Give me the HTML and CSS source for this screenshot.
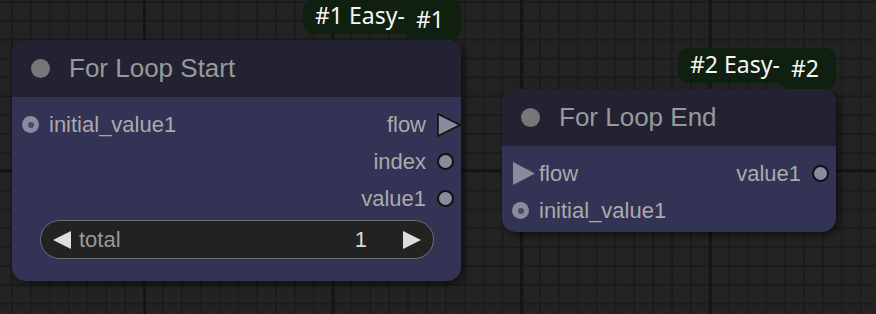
FILE: index.html
```html
<!DOCTYPE html>
<html>
<head>
<meta charset="utf-8">
<link rel="stylesheet" href="styles.css">
</head>
<body>
<div class="canvas">
  <div class="node node-start">
    <div class="badges">
      <span class="badge badge-main">#1 Easy-</span>
      <span class="badge badge-id">#1</span>
    </div>
    <div class="title"><span class="title-dot"></span><span class="title-text">For Loop Start</span></div>
    <div class="body">
      <div class="row">
        <div class="slot-in"><span class="marker"><span class="opt-dot"></span></span><span class="label">initial_value1</span></div>
        <div class="slot-out"><span class="label">flow</span><span class="marker"><svg width="24" height="24" viewBox="0 0 24 24"><polygon points="1,1 23,12 1,23" fill="#8a8a9c" stroke="#111" stroke-width="1.6"/></svg></span></div>
      </div>
      <div class="row">
        <div class="slot-in"></div>
        <div class="slot-out"><span class="label">index</span><span class="marker"><span class="circle"></span></span></div>
      </div>
      <div class="row">
        <div class="slot-in"></div>
        <div class="slot-out"><span class="label">value1</span><span class="marker"><span class="circle"></span></span></div>
      </div>
      <div class="widget">
        <svg class="arrow" width="18" height="18" viewBox="0 0 18 18"><polygon points="18,0 0,9 18,18" fill="#ddd"/></svg>
        <span class="w-label">total</span>
        <span class="w-value">1</span>
        <svg class="arrow" width="18" height="18" viewBox="0 0 18 18"><polygon points="0,0 18,9 0,18" fill="#ddd"/></svg>
      </div>
    </div>
  </div>

  <div class="node node-end">
    <div class="badges">
      <span class="badge badge-main">#2 Easy-</span>
      <span class="badge badge-id">#2</span>
    </div>
    <div class="title"><span class="title-dot"></span><span class="title-text">For Loop End</span></div>
    <div class="body">
      <div class="row">
        <div class="slot-in"><span class="marker"><svg width="23" height="23" viewBox="0 0 23 23"><polygon points="1,0 23,11.5 1,23" fill="#8a8a9c"/></svg></span><span class="label">flow</span></div>
        <div class="slot-out"><span class="label">value1</span><span class="marker"><span class="circle"></span></span></div>
      </div>
      <div class="row">
        <div class="slot-in"><span class="marker"><span class="opt-dot"></span></span><span class="label">initial_value1</span></div>
        <div class="slot-out"></div>
      </div>
    </div>
  </div>
</div>
</body>
</html>
```
FILE: styles.css
```css
html, body {
  margin: 0;
  padding: 0;
  width: 876px;
  height: 314px;
  overflow: hidden;
}

body {
  background-color: #232323;
  background-image:
    linear-gradient(to right, #151515 2.5px, transparent 2.5px),
    linear-gradient(to bottom, #151515 2.5px, transparent 2.5px),
    linear-gradient(to right, #1b1b1b 1.5px, transparent 1.5px),
    linear-gradient(to bottom, #1b1b1b 1.5px, transparent 1.5px);
  background-size: 188.6px 188.6px, 188.6px 188.6px, 18.86px 18.86px, 18.86px 18.86px;
  background-position: 143px 169px, 143px 169px, 11px 1px, 11px 1px;
  font-family: "Liberation Sans", Arial, sans-serif;
}

.canvas {
  position: relative;
  width: 876px;
  height: 314px;
}

.node {
  position: absolute;
  background: #333355;
  border-radius: 14px;
  box-shadow: 3px 3px 7px rgba(0, 0, 0, 0.55);
  display: flex;
  flex-direction: column;
}

.node-start {
  left: 12px;
  top: 40px;
  width: 449px;
  height: 241px;
}

.node-end {
  left: 502px;
  top: 89px;
  width: 334px;
  height: 143px;
}

/* badges */
.badges {
  position: absolute;
  right: 0;
  bottom: 100%;
  display: flex;
  align-items: flex-start;
  font-family: "Noto Sans", "Open Sans", sans-serif;
  font-size: 23px;
  color: #f6f6f6;
}

.badge {
  background: #0f1f10;
  border-radius: 10px;
  box-sizing: border-box;
  white-space: nowrap;
}

.badge-main {
  width: 112px;
  height: 35px;
  line-height: 33px;
  padding-left: 12px;
}

.badge-id {
  width: 56px;
  height: 41px;
  line-height: 40px;
  margin-left: -10px;
  padding-left: 11px;
}

/* title */
.title {
  height: 57px;
  flex: none;
  background: #222233;
  border-radius: 14px 14px 0 0;
  display: flex;
  align-items: center;
  padding-left: 19px;
}

.title-dot {
  width: 19px;
  height: 19px;
  border-radius: 50%;
  background: #777;
  margin-right: 19px;
}

.title-text {
  font-size: 26px;
  color: #999;
  white-space: nowrap;
}

/* body */
.body {
  padding-top: 9px;
  display: flex;
  flex-direction: column;
}

.row {
  height: 37px;
  display: flex;
  align-items: center;
  justify-content: space-between;
}

.slot-in {
  display: flex;
  align-items: center;
  padding-left: 10px;
}

.slot-in .marker {
  width: 23px;
  margin-right: 4px;
}

.slot-out {
  display: flex;
  align-items: center;
}

.slot-out .marker {
  width: 24px;
  margin-left: 11px;
}

.marker {
  display: flex;
  align-items: center;
  justify-content: flex-start;
  height: 24px;
}

.marker svg {
  display: block;
}

.label {
  font-size: 22px;
  color: #aaa;
  white-space: nowrap;
}

.opt-dot {
  width: 17px;
  height: 17px;
  border-radius: 50%;
  background: #8a8aa0;
  display: flex;
  align-items: center;
  justify-content: center;
}

.opt-dot::after {
  content: "";
  width: 6px;
  height: 6px;
  border-radius: 50%;
  background: #4a4a66;
}

.circle {
  width: 13px;
  height: 13px;
  border-radius: 50%;
  background: #8a8a9c;
  border: 2px solid #111;
}

/* widget */
.widget {
  margin: 3px 27px 0 28px;
  height: 39px;
  box-sizing: border-box;
  border: 1.5px solid #707070;
  border-radius: 20px;
  background: #222;
  display: flex;
  align-items: center;
  padding: 0 12px;
  font-size: 22px;
}

.w-label {
  color: #999;
  margin-left: 8px;
  flex: 1;
}

.w-value {
  color: #ddd;
  margin-right: 36px;
}

.arrow {
  display: block;
  flex: none;
}
```
